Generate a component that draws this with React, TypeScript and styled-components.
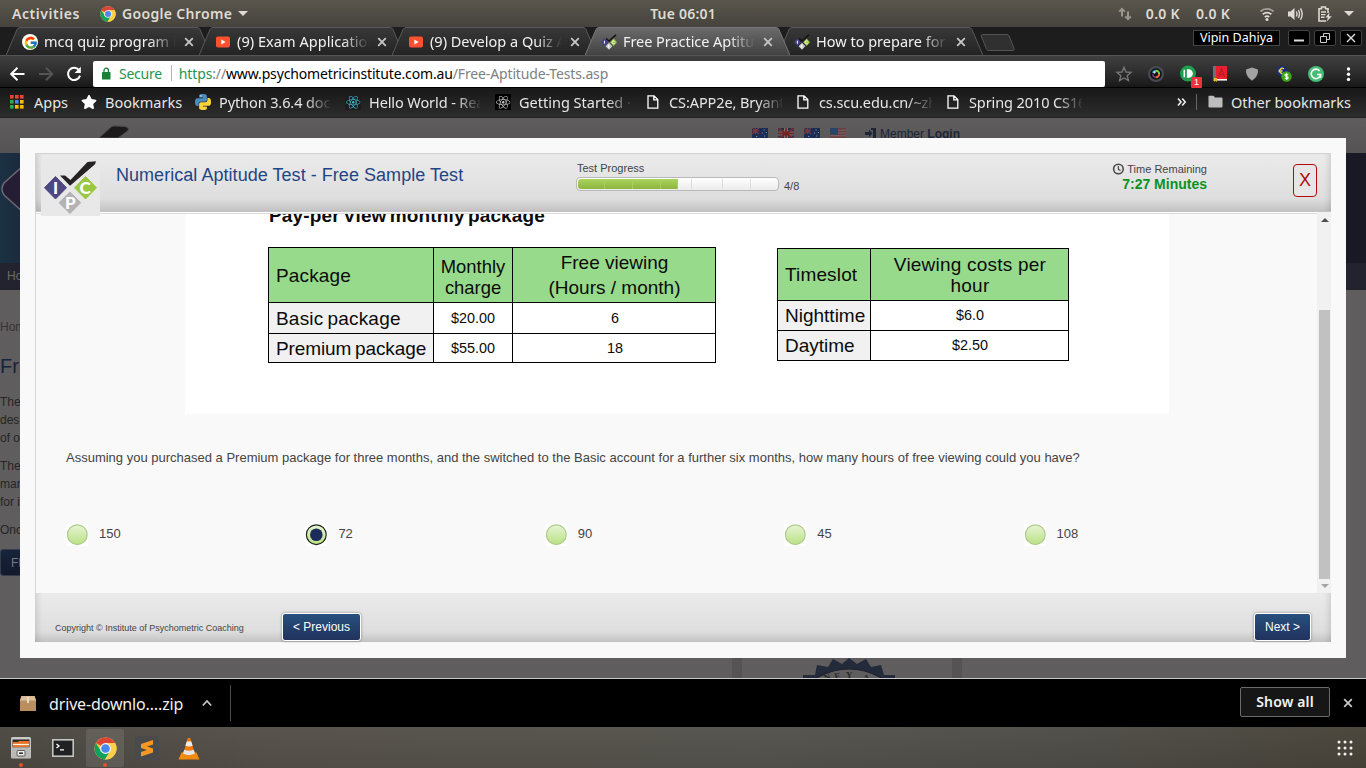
import React from "react";
import styled, { createGlobalStyle, css } from "styled-components";
import { FcGoogle } from "react-icons/fc";
import { FaReact, FaStar } from "react-icons/fa";

const Global = createGlobalStyle`
  * { box-sizing: border-box; }
  body { margin: 0; background: #000; font-family: "Liberation Sans", Arial, sans-serif; }
`;

const uiFont = css`
  font-family: "Noto Sans", "Open Sans", sans-serif;
  font-size: 14.5px;
  white-space: nowrap;
`;

const Screen = styled.div`
  width: 1366px;
  height: 768px;
  display: flex;
  flex-direction: column;
  overflow: hidden;
  & > * { flex-shrink: 0; }
`;

/* ---------- system bar ---------- */

const SystemBar = styled.header`
  ${uiFont}
  height: 27px;
  display: flex;
  align-items: center;
  padding: 0 12px;
  color: #dfdbd2;
  font-weight: 600;
  background: linear-gradient(#5a564d, #45433d);
`;

const SystemSide = styled.div<{ $end?: boolean }>`
  flex: 1;
  display: flex;
  align-items: center;
  justify-content: ${(p) => (p.$end ? "flex-end" : "flex-start")};
`;

const Label = styled.span<{ $size?: number; $ls?: number; $ml?: number; $mr?: number; $w?: number }>`
  font-size: ${(p) => p.$size ?? 14}px;
  letter-spacing: ${(p) => p.$ls ?? 0}px;
  margin-left: ${(p) => p.$ml ?? 0}px;
  margin-right: ${(p) => p.$mr ?? 0}px;
  ${(p) => p.$w && `width: ${p.$w}px;`}
`;

const Caret = styled.i<{ $ml?: number }>`
  border: 5px solid transparent;
  border-top-color: currentColor;
  border-bottom: 0;
  margin-left: ${(p) => p.$ml ?? 6}px;
`;

const Icon = styled.svg<{ $ml?: number; $mr?: number }>`
  display: block;
  flex-shrink: 0;
  margin-left: ${(p) => p.$ml ?? 0}px;
  margin-right: ${(p) => p.$mr ?? 0}px;
`;

/* ---------- tabs ---------- */

const TabStrip = styled.nav`
  height: 28px;
  display: flex;
  background: #1d1d1d;
  padding-left: 6px;
`;

const TabBox = styled.div<{ $active?: boolean }>`
  ${uiFont}
  position: relative;
  z-index: ${(p) => (p.$active ? 2 : 1)};
  width: 205px;
  height: 28px;
  margin-right: -12px;
  padding: 1px 16px 0 16px;
  display: flex;
  align-items: center;
  color: #f2f2f2;
`;

const TabShape = styled.svg`
  position: absolute;
  inset: 0;
  z-index: -1;
`;

const TabTitle = styled.span<{ $ls?: number }>`
  width: 132px;
  margin: -2px 0 0 6px;
  overflow: hidden;
  letter-spacing: ${(p) => p.$ls ?? 0}px;
  mask-image: linear-gradient(90deg, #000 80%, transparent 100%);
`;

const WindowControls = styled.div`
  ${uiFont}
  display: flex;
  align-items: flex-start;
  margin: 3px 4px 0 auto;
  gap: 4px;
`;

const UserTag = styled.span`
  height: 16px;
  width: 87px;
  margin-right: 4px;
  border: 1px solid #444;
  background: #000;
  color: #fff;
  font-size: 12.5px;
  line-height: 14px;
  text-align: center;
`;

const WinButton = styled.span`
  width: 22px;
  height: 16px;
  border: 1px solid #444;
  border-radius: 2px;
  background: #000;
`;

/* ---------- toolbar ---------- */

const Toolbar = styled.div`
  height: 33px;
  display: flex;
  align-items: flex-start;
  padding: 6px 0 0 9px;
  border-top: 1px solid #545454;
  border-bottom: 1px solid #000;
  background: linear-gradient(#404040, #2c2c2c 55%, #181818);
`;

const Omnibox = styled.div`
  ${uiFont}
  width: 1012px;
  height: 26px;
  margin-top: -1px;
  display: flex;
  align-items: center;
  padding: 0 0 2px 8px;
  background: #fff;
  border-radius: 2px;
  color: #000;
`;

const UrlPart = styled.span<{ $c: string }>`
  color: ${(p) => p.$c};
`;

const Divider = styled.span<{ $h: number; $c: string; $m: string }>`
  width: 1px;
  height: ${(p) => p.$h}px;
  margin: ${(p) => p.$m};
  background: ${(p) => p.$c};
`;

const NavIcons = styled.div`
  display: flex;
  width: 84px;
  gap: 10px;
  padding-top: 3px;
`;

const Extensions = styled.div`
  display: flex;
  padding: 3px 0 0 10px;
  gap: 14px;
`;

const ExtensionSlot = styled.div`
  position: relative;
  width: 18px;
  height: 18px;
`;

const Badge = styled.span`
  position: absolute;
  left: 12px;
  top: 12px;
  width: 11px;
  height: 11px;
  background: #f0303c;
  border-radius: 1px;
  color: #fff;
  font-size: 9px;
  line-height: 11px;
  text-align: center;
`;

/* ---------- bookmarks ---------- */

const BookmarkBar = styled.div`
  ${uiFont}
  height: 30px;
  display: flex;
  align-items: center;
  padding: 0 14px 2px 10px;
  color: #e6e6e6;
  background: linear-gradient(#181818, #2c2c2c);
  border-bottom: 1px solid #242424;
`;

const BookmarkItem = styled.div<{ $w: number; $gap: number; $fade?: boolean; $ls?: number }>`
  display: flex;
  align-items: center;
  width: ${(p) => p.$w}px;
  & > span {
    flex: 1;
    margin: 0 ${(p) => (p.$fade ? 15 : 8)}px 0 ${(p) => p.$gap}px;
    letter-spacing: ${(p) => p.$ls ?? 0}px;
    overflow: hidden;
    ${(p) => p.$fade && css`mask-image: linear-gradient(90deg, #000 78%, transparent 102%);`}
  }
`;

/* ---------- dimmed page behind the dialog ---------- */

const Viewport = styled.main`
  position: relative;
  height: 560px;
  background: #5f5d5d;
  overflow: hidden;
  color: #262525;
`;

const PageTop = styled.div`
  height: 35px;
  display: flex;
  align-items: flex-start;
  background: linear-gradient(#5f5d5d, #555354);
`;

const PageMark = styled.svg`
  margin: 6px 0 0 97px;
  display: block;
`;

const Flags = styled.div`
  display: flex;
  gap: 10px;
  margin: 10px 19px 0 621px;
`;

const MemberLogin = styled.div`
  display: flex;
  gap: 3px;
  margin-top: 9px;
  font-size: 12px;
  color: #1d2637;
`;

const Banner = styled.div`
  height: 110px;
  background: linear-gradient(90deg, #1b3143 0, #1a2b3d 20px, #191825 60px);
  overflow: hidden;
`;

const PageNav = styled.div`
  height: 27px;
  padding: 5px 7px;
  background: #232330;
  font-size: 12px;
  line-height: 16px;
  color: #6c6a6a;
`;

const PageText = styled.div`
  font-size: 12px;
  line-height: 18px;
`;

const Crumb = styled.div`
  margin-top: 28px;
  color: #353434;
`;

const PageHeading = styled.h1`
  margin: 18px 0 15px;
  font-size: 20px;
  line-height: 24px;
  font-weight: 400;
  color: #16233c;
`;

const Para = styled.p`
  margin: 0 0 10px;
`;

const PageButton = styled.div`
  width: 60px;
  height: 27px;
  margin-top: 10px;
  padding-left: 10px;
  border: 1px solid #343c4c;
  border-radius: 3px;
  background: linear-gradient(#17243a, #131a2c);
  line-height: 26px;
  color: #77787c;
`;

const SealCard = styled.div`
  position: absolute;
  left: 732px;
  top: 540px;
  width: 230px;
  height: 20px;
  border: solid #555353;
  border-width: 0 10px;
`;

/* ---------- dialog ---------- */

const Dialog = styled.section`
  position: absolute;
  left: 20px;
  top: 20px;
  width: 1326px;
  height: 520px;
  padding: 15px;
  background: #f9f9f9;
`;

const Frame = styled.div`
  height: 489px;
  display: flex;
  flex-direction: column;
  background: #f9f9f9;
`;

const barShade = css`
  background: linear-gradient(#ebebeb, #dedede 78%, #c3c3c3);
  box-shadow: inset 7px 0 6px -5px rgba(0, 0, 0, 0.13), inset -7px 0 6px -5px rgba(0, 0, 0, 0.13);
`;

const TestHeader = styled.div`
  ${barShade}
  position: relative;
  z-index: 1;
  height: 59px;
  display: flex;
  align-items: flex-start;
  border-top: 1px solid #d2d2d2;
  border-left: 1px solid #d2d2d2;
  border-bottom: 1px solid #c4c4c4;
`;

const LogoBox = styled.svg`
  margin: 5px 0 0 5px;
  flex-shrink: 0;
`;

const TestTitle = styled.h2`
  width: 461px;
  margin: 10px 0 0 16px;
  font-size: 18px;
  line-height: 22px;
  font-weight: 400;
  letter-spacing: 0.04px;
  color: #1f4584;
`;

const Progress = styled.div`
  width: 240px;
  padding-top: 7px;
  font-size: 11px;
  line-height: 14px;
  color: #444;
`;

const ProgressRow = styled.div`
  display: flex;
  gap: 5px;
  align-items: flex-start;
  margin: 2px 0 0 -1px;
  & > span { margin-top: 2px; }
`;

const Track = styled.div`
  width: 203px;
  height: 14px;
  border: 1px solid #b9b9b9;
  border-radius: 4px;
  padding: 1px;
  display: flex;
  background: linear-gradient(#fff, #ececec);
`;

const Segment = styled.i<{ $w: number; $on?: boolean }>`
  width: ${(p) => p.$w}px;
  height: 10px;
  border-right: 1px solid ${(p) => (p.$on ? "#a9cf63" : "#dcdcdc")};
  background: ${(p) => (p.$on ? "linear-gradient(#abd45c, #8eb63f)" : "transparent")};
  &:first-child { border-radius: 3px 0 0 3px; }
  &:last-child { border-right: 0; }
`;

const Timer = styled.div`
  margin: 8px 86px 0 auto;
  text-align: right;
  font-size: 11px;
  line-height: 14px;
  color: #444;
`;

const TimerRow = styled.div`
  display: flex;
  align-items: center;
  justify-content: flex-end;
  gap: 3px;
`;

const TimeLeft = styled.strong`
  display: block;
  font-size: 14px;
  line-height: 16px;
  color: #0b9222;
`;

const CloseButton = styled.button`
  width: 24px;
  height: 33px;
  margin: 10px 14px 0 0;
  padding: 0 0 1px;
  border: 1px solid #b30c0c;
  border-radius: 4px;
  background: #e6e6e6;
  color: #b30c0c;
  font: 18px/28px "Liberation Sans", Arial, sans-serif;
`;

const Body = styled.div`
  height: 381px;
  display: flex;
  border-left: 1px solid #d6d6d6;
  overflow: hidden;
`;

const Question = styled.div`
  flex: 1;
  border-top: 1px solid #fff;
  box-shadow: inset 0 1px 0 #dcdcdc;
`;

const Exhibit = styled.div`
  width: 984px;
  height: 200px;
  margin: 1px 0 0 149px;
  padding-left: 83px;
  overflow: hidden;
  background: #fff;
  color: #0b0b0b;
`;

const ExhibitTitle = styled.h3`
  margin: -8px 0 21px 1px;
  font-size: 19px;
  line-height: 20px;
  letter-spacing: 0.15px;
  word-spacing: -2.2px;
  white-space: nowrap;
`;

const Tables = styled.div`
  display: flex;
  align-items: flex-start;
  gap: 61px;
`;

const Grid = styled.div<{ $cols: string; $rows: string; $mt?: number }>`
  display: grid;
  grid-template-columns: ${(p) => p.$cols};
  grid-template-rows: ${(p) => p.$rows};
  gap: 1px;
  padding: 1px;
  margin-top: ${(p) => p.$mt ?? 0}px;
  background: #000;
`;

const Cell = styled.div<{
  $kind: "head" | "name" | "value";
  $left?: boolean;
  $lh?: number;
  $size?: number;
  $ls?: number;
  $ws?: number;
  $drop?: number;
  $shift?: number;
}>`
  display: flex;
  flex-direction: column;
  justify-content: center;
  text-align: ${(p) => (p.$left ? "left" : "center")};
  padding-left: ${(p) => (p.$left ? 7 : p.$shift ?? 0)}px;
  padding-top: ${(p) => p.$drop ?? 0}px;
  font-size: ${(p) => p.$size ?? (p.$kind === "value" ? 14.4 : 19)}px;
  line-height: ${(p) => p.$lh ?? 21}px;
  letter-spacing: ${(p) => p.$ls ?? 0}px;
  word-spacing: ${(p) => p.$ws ?? 0}px;
  white-space: pre;
  background: ${(p) => ({ head: "#98da8c", name: "#f1f1f1", value: "#fff" })[p.$kind]};
`;

const Prompt = styled.p`
  margin: 35px 0 0 30px;
  font-size: 13px;
  line-height: 18px;
  color: #444;
`;

const Options = styled.div`
  display: flex;
  margin: 57px 0 0 30px;
`;

const Option = styled.label`
  width: 239.4px;
  display: flex;
  gap: 11px;
  font-size: 13px;
  line-height: 20px;
  color: #444;
`;

const ScrollBar = styled.div`
  width: 14px;
  display: flex;
  flex-direction: column;
  align-items: center;
  background: #f1f1f1;
`;

const Arrow = styled.i<{ $down?: boolean }>`
  border: 4px solid transparent;
  margin: ${(p) => (p.$down ? "5px" : "6px")} 0 0 1px;
  ${(p) =>
    p.$down
      ? "border-top-color: #a3a3a3; border-bottom: 0;"
      : "border-bottom-color: #505050; border-top: 0;"}
`;

const Thumb = styled.div`
  width: 11px;
  height: 269px;
  margin: 88px 0 0 1px;
  background: #c1c1c1;
`;

const TestFooter = styled.div`
  ${barShade}
  height: 49px;
  display: flex;
  align-items: flex-start;
  padding: 20px 20px 0 20px;
`;

const Copyright = styled.span`
  width: 227px;
  padding-top: 10px;
  font-size: 9px;
  line-height: 10px;
  color: #444;
`;

const NavButton = styled.button<{ $w: number; $end?: boolean }>`
  width: ${(p) => p.$w}px;
  height: 28px;
  margin-left: ${(p) => (p.$end ? "auto" : 0)};
  padding: 0;
  border: 1px solid #fff;
  border-radius: 3px;
  background: linear-gradient(#27507e, #21325c);
  box-shadow: 0 0 3px rgba(0, 0, 0, 0.4);
  color: #fff;
  font: 12px/25px "Liberation Sans", Arial, sans-serif;
`;

/* ---------- download shelf and dock ---------- */

const Shelf = styled.div`
  ${uiFont}
  height: 49px;
  display: flex;
  align-items: center;
  padding: 0 13px 0 20px;
  border-top: 1px solid #c9c9c9;
  background: #000;
  color: #f0f0f0;
`;

const FileName = styled.span`
  width: 134px;
  margin: 1px 0 0 13px;
  font-size: 16px;
  letter-spacing: -0.15px;
`;

const ShowAll = styled.button`
  ${uiFont}
  width: 90px;
  height: 30px;
  margin: 0 13px 2px auto;
  padding: 0 0 1px;
  border: 1px solid #6a6a6a;
  border-radius: 2px;
  background: #161616;
  color: #f4f4f4;
  font-size: 14px;
  font-weight: 600;
  letter-spacing: 0.15px;
`;

const Dock = styled.footer`
  height: 41px;
  display: flex;
  align-items: flex-start;
  padding: 2px 13px 0 2px;
  background:
    linear-gradient(rgba(255, 255, 255, 0.02), rgba(0, 0, 0, 0.06)),
    linear-gradient(90deg, #4c4842, #55514a 20%, #55534d 55%, #4f4d47 80%, #48443a);
`;

const DockItem = styled.div<{ $active?: boolean; $running?: boolean }>`
  position: relative;
  width: 38px;
  height: 38px;
  margin-right: 4px;
  display: flex;
  align-items: center;
  justify-content: center;
  border-radius: 3px;
  background: ${(p) => (p.$active ? "rgba(255,255,255,0.1)" : "transparent")};
  &::after {
    content: "";
    display: ${(p) => (p.$running ? "block" : "none")};
    position: absolute;
    left: 17px;
    bottom: 0;
    width: 4px;
    height: 4px;
    border-radius: 50%;
    background: #e2512a;
  }
`;

const AppGrid = styled.div`
  margin: 11px 0 0 auto;
`;

/* ---------- drawings ---------- */

const ChromeLogo = ({ size }: { size: number }) => (
  <Icon width={size} height={size} viewBox="0 0 24 24">
    <circle cx="12" cy="12" r="11.5" fill="#fc4" />
    <path d="M12 12 2 6.3A11.5 11.5 0 0 1 22 6.3H12Z" fill="#db4437" />
    <path d="M2 6.3A11.5 11.5 0 0 0 11.4 23.5L16.6 14.8 12 12 7.2 14.6Z" fill="#12a15c" />
    <path d="M12 6.3H22A11.5 11.5 0 0 1 11.4 23.5L17 14.8Z" fill="#fdd04a" />
    <circle cx="12" cy="12" r="5.7" fill="#f4f4f4" />
    <circle cx="12" cy="12" r="4.5" fill="#4a87ee" />
  </Icon>
);

const GoogleIcon = () => (
  <Icon width="16" height="16" viewBox="0 0 16 16">
    <circle cx="8" cy="8" r="8" fill="#fff" />
    <FcGoogle x="1.5" y="1.5" width="13" height="13" />
  </Icon>
);

const VideoIcon = () => (
  <Icon width="16" height="16" viewBox="0 0 16 16">
    <rect x="1" y="2.5" width="14" height="11" rx="2" fill="#ff512e" />
    <path d="M6.3 5.5v5L10.6 8Z" fill="#fff" />
  </Icon>
);

const SmallMark = () => (
  <Icon width="16" height="16" viewBox="0 0 16 16">
    <path d="M0 8.2 3.4 4.5 6.9 8.2 3.4 12Z" fill="#443f87" />
    <path d="M9.2 8.2 12.6 4.5 16 8.2 12.6 12Z" fill="#9ac93f" />
    <path d="M4.6 12.2 8 8.8 11.3 12.2 8 15.8Z" fill="#d0d0d0" />
    <path d="M5 4.5 8 7 15 .8" fill="none" stroke="#141414" strokeWidth="1.6" />
    <path d="M3.4 6.7v3M13.6 7.4a1.4 1.4 0 1 0 0 1.8M7.6 10.8v3" stroke="#fff" fill="none" strokeWidth="1" />
  </Icon>
);

const CloseMark = ({ ml }: { ml?: number }) => (
  <Icon width="10" height="10" viewBox="0 0 10 10" $ml={ml}>
    <path d="M1.2 1.2 8.8 8.8M8.8 1.2 1.2 8.8" stroke="#c6c6c6" strokeWidth="1.8" />
  </Icon>
);

const PY =
  "M14.25.18l.9.2.73.26.59.3.45.32.34.34.25.34.16.33.1.3.04.26.02.2-.01.13V8.5l-.05.63-.13.55-.21.46-.26.38-.3.31-.33.25-.35.19-.35.14-.33.1-.3.07-.26.04-.21.02H8.77l-.69.05-.59.14-.5.22-.41.27-.33.32-.27.35-.2.36-.15.37-.1.35-.07.32-.04.27-.02.21v3.06H3.17l-.21-.03-.28-.07-.32-.12-.35-.18-.36-.26-.36-.36-.35-.46-.32-.59-.28-.73-.21-.88-.14-1.05-.05-1.23.06-1.22.16-1.04.24-.87.32-.71.36-.57.4-.44.42-.33.42-.24.4-.16.36-.1.32-.05.24-.01h.16l.06.01h8.16v-.83H6.18l-.01-2.75-.02-.37.05-.34.11-.31.17-.28.25-.26.31-.23.38-.2.44-.18.51-.15.58-.12.64-.1.71-.06.77-.04.84-.02 1.27.05z";

const PythonIcon = () => (
  <Icon width="16" height="16" viewBox="0 0 24 24">
    <path d={PY} fill="#4b8bbe" />
    <path d={PY} fill="#ffd43b" transform="rotate(180 12 12)" />
    <circle cx="8.8" cy="2.9" r="1" fill="#fff" />
  </Icon>
);

const PageIcon = () => (
  <Icon width="12" height="14" viewBox="0 0 12 14">
    <path d="M1 .8H7L10.8 4.6V13.2H1ZM6.8 .8V4.8H10.8" fill="none" stroke="#fff" strokeWidth="1.3" />
  </Icon>
);

const appColors = ["#ea4335", "#ea4335", "#ea4335", "#34a853", "#4285f4", "#fbbc05", "#34a853", "#fbbc05", "#fbbc05"];

const AppsIcon = () => (
  <Icon width="14" height="14" viewBox="0 0 14 14">
    {appColors.map((c, i) => (
      <rect key={i} x={(i % 3) * 5} y={Math.floor(i / 3) * 5} width="3.6" height="3.6" fill={c} />
    ))}
  </Icon>
);

const ReactIcon = ({ color, bg }: { color: string; bg: string }) => (
  <Icon width="16" height="16" viewBox="0 0 16 16">
    <rect width="16" height="16" fill={bg} />
    <FaReact x="1" y="1" width="14" height="14" color={color} />
  </Icon>
);

const Flag = ({ kind }: { kind: "au" | "uk" | "us" }) => (
  <Icon width="16" height="11" viewBox="0 0 16 11">
    <rect width="16" height="11" fill={kind === "us" ? "#6a3f42" : "#1b2c55"} />
    {kind === "us" && (
      <>
        <path d="M0 2.2H16M0 5H16M0 7.8H16" stroke="#77696a" strokeWidth="1.1" />
        <rect width="8" height="6.5" fill="#2b4366" />
      </>
    )}
    {kind === "uk" && (
      <>
        <path d="M0 0 16 11M16 0 0 11" stroke="#716b72" strokeWidth="2" />
        <path d="M8 0V11M0 5.5H16" stroke="#7c7477" strokeWidth="4" />
        <path d="M8 0V11M0 5.5H16M0 0 16 11M16 0 0 11" stroke="#702424" strokeWidth="1.8" />
      </>
    )}
    {kind === "au" && (
      <>
        <path d="M0 0 7 6M7 0 0 6M3.5 0V6M0 3H7" stroke="#753a40" strokeWidth="1.2" />
        <path d="M11.5 2h1.2M13.8 4.5H15M9.8 5H11M12 8h1.2M4 8.5h1.4" stroke="#858691" strokeWidth="1.2" />
      </>
    )}
  </Icon>
);

const markText = { fontFamily: "Lato, sans-serif", fontWeight: 900, fill: "#fff", textAnchor: "middle" as const };

const IpcLogo = () => (
  <LogoBox width="59" height="57" viewBox="0 0 59 57">
    <rect width="59" height="57" fill="#e8e8e8" />
    <path d="M14.5 17.5 25.5 28.8 14.5 40 3.5 28.8Z" fill="#4d4782" stroke="#4d4782" strokeLinejoin="round" />
    <path d="M44.5 17.5 55.5 28.8 44.5 40 33.5 28.8Z" fill="#9bc841" stroke="#9bc841" strokeLinejoin="round" />
    <path d="M29 33 39.7 43.7 29 54.5 18 43.7Z" fill="#b3b3b5" stroke="#b3b3b5" strokeLinejoin="round" />
    <path d="M19 16.5H24L29.5 21 46.5 3 55 2.2 54 5.2 29 26.8Z" fill="#262223" />
    <text x="14.5" y="34.7" fontSize="17" {...markText}>I</text>
    <text x="44" y="34.7" fontSize="17" {...markText}>C</text>
    <text x="29.4" y="49.5" fontSize="17" {...markText}>P</text>
  </LogoBox>
);

const Radio = ({ on }: { on?: boolean }) => (
  <Icon width="22" height="22" viewBox="0 0 22 22">
    <defs>
      <linearGradient id="pea" x1="0" y1="0" x2="0" y2="1">
        <stop offset="0" stopColor="#e6f5d5" />
        <stop offset="1" stopColor="#b9e184" />
      </linearGradient>
    </defs>
    <rect width="22" height="22" fill="#fff" />
    <circle cx="11.3" cy="10.7" r="9.9" fill="url(#pea)" stroke={on ? "#1b2417" : "#aecb8d"} strokeWidth="1.2" />
    {on && <circle cx="11.3" cy="10.7" r="6.3" fill="#1d2b5b" />}
  </Icon>
);

const tabs = [
  { icon: <GoogleIcon />, title: "mcq quiz program in", ls: 0 },
  { icon: <VideoIcon />, title: "(9) Exam Application", ls: 0.05 },
  { icon: <VideoIcon />, title: "(9) Develop a Quiz A", ls: 0 },
  { icon: <SmallMark />, title: "Free Practice Aptitud", ls: -0.05, active: true },
  { icon: <SmallMark />, title: "How to prepare for a", ls: 0 },
];

const bookmarks = [
  { icon: <AppsIcon />, text: "Apps", w: 71, gap: 10, ls: 0 },
  { icon: <FaStar size={16} color="#fff" />, text: "Bookmarks", w: 114, gap: 8, ls: 0 },
  { icon: <PythonIcon />, text: "Python 3.6.4 docu", w: 150, gap: 8, ls: -0.1, fade: true },
  { icon: <ReactIcon color="#3fb8c9" bg="#1c1c1c" />, text: "Hello World - Reac", w: 150, gap: 8, ls: -0.1, fade: true },
  { icon: <ReactIcon color="#c9c9c9" bg="#000" />, text: "Getting Started ·", w: 152, gap: 8, ls: 0, fade: true },
  { icon: <PageIcon />, text: "CS:APP2e, Bryant", w: 150, gap: 10, ls: -0.1, fade: true },
  { icon: <PageIcon />, text: "cs.scu.edu.cn/~zh", w: 150, gap: 10, ls: -0.1, fade: true },
  { icon: <PageIcon />, text: "Spring 2010 CS16", w: 150, gap: 10, ls: -0.1, fade: true },
];

const packages = [
  { name: "Basic package", fee: "$20.00", hours: "6", ls: 0.2, ws: -1.5 },
  { name: "Premium package", fee: "$55.00", hours: "18", ls: -0.1, ws: -1.5 },
];
const slots = [
  { name: "Nighttime", cost: "$6.0" },
  { name: "Daytime", cost: "$2.50" },
];

export default function App() {
  return (
    <Screen>
      <Global />
      <SystemBar>
        <SystemSide>
          <Label $mr={20} $ls={0.55}>Activities</Label>
          <ChromeLogo size={16} />
          <Label $ml={6} $ls={0.33}>Google Chrome</Label>
          <Caret />
        </SystemSide>
        <Label $ls={0.2}>Tue 06:01</Label>
        <SystemSide $end>
          <Icon width="14" height="14" viewBox="0 0 14 14" $mr={14}>
            <path d="M4 9.5V2M1.2 4.6 4 1.8 6.8 4.6M10 4.5V12M7.2 9.4 10 12.2 12.8 9.4" fill="none" stroke="#9a968d" strokeWidth="2" />
          </Icon>
          <Label $mr={16} $ls={0.3}>0.0 K</Label>
          <Label $mr={29} $ls={0.3}>0.0 K</Label>
          <Icon width="16" height="14" viewBox="0 0 16 14" $mr={12}>
            <path d="M1.5 4.5A9.5 9.5 0 0 1 14.5 4.5" fill="none" stroke="#a39f96" strokeWidth="1.8" />
            <path d="M3.8 7.3A6 6 0 0 1 12.2 7.3M5.8 10A3.4 3.4 0 0 1 10.2 10" fill="none" stroke="#dfdbd2" strokeWidth="1.8" />
            <circle cx="8" cy="12.4" r="1.5" fill="#dfdbd2" />
          </Icon>
          <Icon width="17" height="16" viewBox="0 0 17 16" $mr={13}>
            <path d="M1 5.5H3.5L7.5 2V14L3.5 10.5H1Z" fill="#dfdbd2" />
            <path d="M9.3 5.5Q10.7 8 9.3 10.5M11.4 4Q13.6 8 11.4 12M13.5 2.4Q16.8 8 13.5 13.6" fill="none" stroke="#dfdbd2" strokeWidth="1.4" />
          </Icon>
          <Icon width="16" height="16" viewBox="0 0 16 16" $mr={4}>
            <path d="M9 15H2V2.8H4.5V1H8.5V2.8H11V7" fill="none" stroke="#dfdbd2" strokeWidth="1.6" />
            <path d="M4 6H9M4 8.6H8.5M4 11.2H7.5" stroke="#dfdbd2" strokeWidth="1.4" />
            <path d="M12.5 6.5 8.5 11.6H11L9.5 15.8 14.8 10.2H12Z" fill="#dfdbd2" />
          </Icon>
          <Caret $ml={7} />
        </SystemSide>
      </SystemBar>

      <TabStrip>
        {tabs.map((t) => (
          <TabBox key={t.title} $active={t.active}>
            <TabShape width="205" height="28" viewBox="0 0 205 28">
              <defs>
                <linearGradient id={t.active ? "tabOn" : "tabOff"} x1="0" y1="0" x2="0" y2="1">
                  <stop offset="0" stopColor={t.active ? "#6b6b6b" : "#383838"} />
                  <stop offset="1" stopColor={t.active ? "#414141" : "#232323"} />
                </linearGradient>
              </defs>
              <path
                d="M0 28.5 11 2.5Q12 .5 14 .5H191Q193 .5 194 2.5L205 28.5"
                fill={t.active ? "url(#tabOn)" : "url(#tabOff)"}
                stroke={t.active ? "#777" : "#585858"}
              />
            </TabShape>
            {t.icon}
            <TabTitle $ls={t.ls}>{t.title}</TabTitle>
            <CloseMark ml={8} />
          </TabBox>
        ))}
        <Icon width="36" height="28" viewBox="0 0 36 28" $ml={9}>
          <path d="M2.5 7.5H27Q28.5 7.5 29.2 9L34 21.5Q34.5 23.5 33 23.5H9Q7 23.5 6.5 22L1.2 9Q1 7.5 2.5 7.5Z" fill="#303030" stroke="#555" />
        </Icon>
        <WindowControls>
          <UserTag>Vipin Dahiya</UserTag>
          <WinButton>
            <Icon width="20" height="14"><path d="M5 9.5H15" stroke="#ddd" strokeWidth="2" /></Icon>
          </WinButton>
          <WinButton>
            <Icon width="20" height="14">
              <path d="M5.5 5.5H11.5V11.5H5.5ZM8.5 5.5V2.5H14.5V8.5H11.5" fill="none" stroke="#ccc" />
            </Icon>
          </WinButton>
          <WinButton>
            <Icon width="20" height="14"><path d="M6 3 14 11M14 3 6 11" stroke="#ddd" strokeWidth="1.4" /></Icon>
          </WinButton>
        </WindowControls>
      </TabStrip>

      <Toolbar>
        <NavIcons>
          <Icon width="18" height="18" viewBox="0 0 18 18">
            <path d="M15.5 9H2.5M8.5 2.8 2.2 9 8.5 15.2" fill="none" stroke="#fff" strokeWidth="2" />
          </Icon>
          <Icon width="18" height="18" viewBox="0 0 18 18">
            <path d="M2 9H15M9 2.8 15.3 9 9 15.2" fill="none" stroke="#555" strokeWidth="2" />
          </Icon>
          <Icon width="18" height="18" viewBox="0 0 18 18">
            <path d="M14 5.2A6.1 6.1 0 1 0 15 10.6" fill="none" stroke="#fff" strokeWidth="2" />
            <path d="M15.8 1.8V8H9.6Z" fill="#fff" />
          </Icon>
        </NavIcons>
        <Omnibox>
          <Icon width="10" height="13" viewBox="0 0 10 13" $mr={8}>
            <rect x="1" y="5" width="8.5" height="7.5" rx=".6" fill="#1a8038" />
            <path d="M3 5V3.4A2.2 2.2 0 0 1 7.4 3.4V5" fill="none" stroke="#1a8038" strokeWidth="1.3" />
          </Icon>
          <Label $ls={-0.25}><UrlPart $c="#239650">Secure</UrlPart></Label>
          <Divider $h={16} $c="#b5b5b5" $m="0 7px 0 9px" />
          <Label $ls={-0.14}>
            <UrlPart $c="#239650">https</UrlPart>
            <UrlPart $c="#808080">://</UrlPart>
            www.psychometricinstitute.com.au
            <UrlPart $c="#808080">/Free-Aptitude-Tests.asp</UrlPart>
          </Label>
        </Omnibox>
        <Extensions>
          <Icon width="18" height="18" viewBox="0 0 18 18">
            <path d="M9 2.2 11 7 16 7.4 12.2 10.7 13.4 15.6 9 13 4.6 15.6 5.8 10.7 2 7.4 7 7Z" fill="none" stroke="#747474" strokeWidth="1.4" />
          </Icon>
          <Icon width="18" height="18" viewBox="0 0 18 18">
            <circle cx="9" cy="9" r="8" fill="#474b51" />
            <circle cx="9" cy="9" r="5.8" fill="#101216" />
            <path d="M6 8A3.2 3.2 0 0 1 9 5.8" stroke="#3aa0e8" strokeWidth="1.9" fill="none" />
            <path d="M9 5.8A3.2 3.2 0 0 1 12.2 9" stroke="#7fd04a" strokeWidth="1.9" fill="none" />
            <path d="M12.2 9A3.2 3.2 0 0 1 9 12.2" stroke="#f06a3a" strokeWidth="1.9" fill="none" />
            <path d="M9 12.2A3.2 3.2 0 0 1 5.8 9" stroke="#7a3a90" strokeWidth="1.4" fill="none" />
            <circle cx="7.6" cy="7.4" r="1.1" fill="#dfe9f5" />
          </Icon>
          <ExtensionSlot>
            <Icon width="18" height="18" viewBox="0 0 18 18">
              <circle cx="9" cy="8.6" r="8" fill="#1f9e4d" />
              <path d="M5.3 4.8V12.2M8.6 5V12H9.6A3.5 3.5 0 0 0 9.6 5Z" fill="#fff" stroke="#fff" strokeWidth="1.5" />
            </Icon>
            <Badge>1</Badge>
          </ExtensionSlot>
          <Icon width="18" height="18" viewBox="0 0 18 18">
            <rect x="2" y="1" width="4" height="15" fill="#6c7077" />
            <rect x="5" y="1" width="11" height="13" fill="#e8202e" />
            <path d="M7.5 12 10.5 4 13.5 12M8.5 9.5H12.5" stroke="#b81824" strokeWidth="1.2" fill="none" />
            <path d="M5 14.8H16" stroke="#f4f4f4" strokeWidth="1.6" />
            <path d="M3 13h3v4l-1.5-1.2-1.5 1.2z" fill="#f1b12c" />
          </Icon>
          <Icon width="18" height="18" viewBox="0 0 18 18">
            <path d="M9 2.5 15 4.6Q15.6 11.5 9 15.8 2.4 11.5 3 4.6Z" fill="#a2a2a2" />
          </Icon>
          <Icon width="18" height="18" viewBox="0 0 18 18">
            <circle cx="7" cy="6" r="5.2" fill="#182a8c" />
            <path d="M9 3.8A2.7 2.7 0 1 0 9 8M3.5 5.2H7.5M3.5 6.8H7.5" fill="none" stroke="#f5e23c" strokeWidth="1.1" />
            <circle cx="11.5" cy="11.5" r="5.2" fill="#3fa51c" />
            <path d="M13.2 9.8Q10 8.6 10 10.3 10 11.2 11.6 11.5 13.2 11.8 13.2 12.8 13 14.4 9.9 13.3M11.6 8.2V15" fill="none" stroke="#fff" strokeWidth="1.1" />
          </Icon>
          <Icon width="18" height="18" viewBox="0 0 18 18">
            <circle cx="9" cy="9" r="8" fill="#45bd74" />
            <path d="M12.6 5.9A4.7 4.7 0 1 0 13.6 9.5H10M13.6 9.3V12.8" fill="none" stroke="#fff" strokeWidth="1.6" />
          </Icon>
          <Icon width="18" height="18" viewBox="0 0 18 18">
            <circle cx="9.5" cy="4" r="1.7" fill="#fff" />
            <circle cx="9.5" cy="9.2" r="1.7" fill="#fff" />
            <circle cx="9.5" cy="14.4" r="1.7" fill="#fff" />
          </Icon>
        </Extensions>
      </Toolbar>

      <BookmarkBar>
        {bookmarks.map((b) => (
          <BookmarkItem key={b.text} $w={b.w} $gap={b.gap} $fade={b.fade} $ls={b.ls}>
            {b.icon}
            <span>{b.text}</span>
          </BookmarkItem>
        ))}
        <Icon width="10" height="10" viewBox="0 0 10 10" $ml={80}>
          <path d="M1 1.5 4 5 1 8.5M5.2 1.5 8.2 5 5.2 8.5" fill="none" stroke="#eee" strokeWidth="1.6" />
        </Icon>
        <Divider $h={16} $c="#666" $m="0 11px 0 9px" />
        <Icon width="15" height="13" viewBox="0 0 15 13" $mr={8}>
          <path d="M1 .8H5.5L7 2.5H13.5Q14.5 2.5 14.5 3.5V11.5Q14.5 12.5 13.5 12.5H1.5Q.5 12.5 .5 11.5V1.5Q.5 .8 1 .8Z" fill="#bdbdbd" />
        </Icon>
        <span>Other bookmarks</span>
      </BookmarkBar>

      <Viewport>
        <PageTop>
          <PageMark width="34" height="14" viewBox="0 0 34 14">
            <path d="M2 14 14 3Q16 1.5 19 2L28 2.5Q33 4 30.5 7L21 14Z" fill="#1d1a1b" stroke="#4b494a" />
          </PageMark>
          <Flags>
            <Flag kind="au" />
            <Flag kind="uk" />
            <Flag kind="au" />
            <Flag kind="us" />
          </Flags>
          <MemberLogin>
            <Icon width="12" height="12" viewBox="0 0 12 12">
              <path d="M6 1H11V12H8V3H6ZM0 5H4V2.5L7.5 6.5 4 10V8H0Z" fill="#1d2637" />
            </Icon>
            <span>Member <b>Login</b></span>
          </MemberLogin>
        </PageTop>
        <Banner>
          <Icon width="40" height="60" viewBox="0 0 40 60">
            <path d="M24 12 4 30Q0 36 4 42L24 60" fill="#241d33" stroke="#6d6872" strokeWidth="1.5" />
          </Icon>
        </Banner>
        <PageNav>Ho</PageNav>
        <PageText>
          <Crumb>Hom</Crumb>
          <PageHeading>Fr</PageHeading>
          <Para>The<br />des<br />of o</Para>
          <Para>The<br />mar<br />for i</Para>
          <Para>Onc</Para>
          <PageButton>FI</PageButton>
        </PageText>
        <SealCard>
          <Icon width="96" height="20" viewBox="0 0 96 20" $ml={59}>
            <path d="M2 20V17L14 17 16 7 27 9 32 1 41 6 48 0 56 6 65 1 70 9 80 7 83 17 94 17V20Z" fill="#232a3a" />
            <path d="M12 22Q48 0 84 22" fill="#5f5d5d" stroke="#1d2230" strokeWidth="1.2" />
            <g fontFamily="Liberation Serif, serif" fontSize="9" fontWeight="700" fill="#262525">
              <text x="24" y="23" transform="rotate(-18 24 23)">N</text>
              <text x="34" y="21.5" transform="rotate(-10 34 21)">E</text>
              <text x="45" y="20">Y</text>
              <text x="62" y="23">A</text>
            </g>
          </Icon>
        </SealCard>

        <Dialog>
          <Frame>
            <TestHeader>
              <IpcLogo />
              <TestTitle>Numerical Aptitude Test - Free Sample Test</TestTitle>
              <Progress>
                Test Progress
                <ProgressRow>
                  <Track>
                    <Segment $w={27} $on />
                    <Segment $w={28} $on />
                    <Segment $w={28} $on />
                    <Segment $w={17} $on />
                    <Segment $w={14} />
                    <Segment $w={31} />
                    <Segment $w={28} />
                    <Segment $w={26} />
                  </Track>
                  <span>4/8</span>
                </ProgressRow>
              </Progress>
              <Timer>
                <TimerRow>
                  <Icon width="12" height="12" viewBox="0 0 12 12">
                    <circle cx="6.4" cy="6" r="4.8" fill="none" stroke="#4a4a4a" strokeWidth="1.6" />
                    <path d="M6.4 3V6.3L8.6 7.5" fill="none" stroke="#4a4a4a" strokeWidth="1.2" />
                  </Icon>
                  Time Remaining
                </TimerRow>
                <TimeLeft>7:27 Minutes</TimeLeft>
              </Timer>
              <CloseButton>X</CloseButton>
            </TestHeader>

            <Body>
              <Question>
                <Exhibit>
                  <ExhibitTitle>Pay-per View monthly package</ExhibitTitle>
                  <Tables>
                    <Grid $cols="164px 78px 202px" $rows="54px 30px 28px">
                      <Cell $kind="head" $left $ls={0.15}>Package</Cell>
                      <Cell $kind="head" $size={18.4} $drop={4}>{"Monthly\ncharge"}</Cell>
                      <Cell $kind="head" $lh={25} $shift={1}>{"Free viewing\n(Hours / month)"}</Cell>
                      {packages.map((p) => (
                        <React.Fragment key={p.name}>
                          <Cell $kind="name" $left $ls={p.ls} $ws={p.ws}>{p.name}</Cell>
                          <Cell $kind="value">{p.fee}</Cell>
                          <Cell $kind="value" $shift={2}>{p.hours}</Cell>
                        </React.Fragment>
                      ))}
                    </Grid>
                    <Grid $cols="92px 197px" $rows="51px 29px 29px" $mt={1}>
                      <Cell $kind="head" $left $ls={0.15}>Timeslot</Cell>
                      <Cell $kind="head" $ls={0.22} $drop={1} $shift={1}>{"Viewing costs per\nhour"}</Cell>
                      {slots.map((s) => (
                        <React.Fragment key={s.name}>
                          <Cell $kind="name" $left>{s.name}</Cell>
                          <Cell $kind="value" $shift={1}>{s.cost}</Cell>
                        </React.Fragment>
                      ))}
                    </Grid>
                  </Tables>
                </Exhibit>
                <Prompt>
                  Assuming you purchased a Premium package for three months, and the switched to the Basic account for a
                  further six months, how many hours of free viewing could you have?
                </Prompt>
                <Options>
                  {["150", "72", "90", "45", "108"].map((v) => (
                    <Option key={v}>
                      <Radio on={v === "72"} />
                      {v}
                    </Option>
                  ))}
                </Options>
              </Question>
              <ScrollBar>
                <Arrow />
                <Thumb />
                <Arrow $down />
              </ScrollBar>
            </Body>

            <TestFooter>
              <Copyright>Copyright © Institute of Psychometric Coaching</Copyright>
              <NavButton $w={79}>&lt; Previous</NavButton>
              <NavButton $w={57} $end>Next &gt;</NavButton>
            </TestFooter>
          </Frame>
        </Dialog>
      </Viewport>

      <Shelf>
        <Icon width="16" height="15" viewBox="0 0 16 15">
          <path d="M1.5 0H14.5L16 4V15H0V4Z" fill="#b98f62" />
          <path d="M1.5 0H14.5L16 4.5H0Z" fill="#dcbf9a" />
          <path d="M8 1V7" stroke="#efe0ca" strokeWidth="1.8" />
        </Icon>
        <FileName>drive-downlo….zip</FileName>
        <Icon width="10" height="8" viewBox="0 0 10 8" $ml={19} $mr={18}>
          <path d="M.8 6.5 5 2 9.2 6.5" fill="none" stroke="#c8c8c8" strokeWidth="1.7" />
        </Icon>
        <Divider $h={36} $c="#4a4a4a" $m="0" />
        <ShowAll>Show all</ShowAll>
        <CloseMark />
      </Shelf>

      <Dock>
        <DockItem $running>
          <Icon width="22" height="22" viewBox="0 0 22 22">
            <rect x="1" y="0" width="20" height="21.5" rx="1.5" fill="#c9c9c7" />
            <rect x="2.5" y="2.5" width="17" height="8" fill="#2e2a27" />
            <path d="M3 8V5H8L9 4H19V10H3Z" fill="#e4742c" />
            <path d="M3 7.5H19" stroke="#fff3e2" strokeWidth="1.2" />
            <path d="M1.5 10.5H20.5V21H1.5Z" fill="#b9b9b7" />
            <rect x="7" y="13.5" width="8" height="5.5" rx="1" fill="#eee" stroke="#5b5b5b" />
            <path d="M9 16.2H13" stroke="#333" strokeWidth="1.6" />
          </Icon>
        </DockItem>
        <DockItem>
          <Icon width="22" height="18" viewBox="0 0 22 18">
            <rect x=".8" y=".8" width="20.4" height="16.4" fill="#1f2122" stroke="#c4c4c2" strokeWidth="1.6" />
            <path d="M4.5 5 7 7 4.5 9M8 10.8H12" fill="none" stroke="#fff" strokeWidth="1.3" />
          </Icon>
        </DockItem>
        <DockItem $active $running><ChromeLogo size={23} /></DockItem>
        <DockItem>
          <Icon width="24" height="24" viewBox="0 0 24 24">
            <rect width="24" height="24" rx="2" fill="#4a4a4b" />
            <path d="M18 4V8.5L12 10.5 18 12.5V16.5L6 20.5V16L12 14 6 12V8Z" fill="#f89820" />
          </Icon>
        </DockItem>
        <DockItem>
          <Icon width="22" height="23" viewBox="0 0 22 23">
            <path d="M3.5 15.5H18.5L21.5 22.5H.5Z" fill="#f48b0c" />
            <path d="M9.8 1H12.2L17 17Q11 20.5 5 17Z" fill="#f07a0c" />
            <path d="M8.7 4.5H13.3L14.6 8.8Q11 10.3 7.4 8.8Z" fill="#ececec" />
            <path d="M6.2 12.7Q11 15 15.8 12.7L17 16.5Q11 20 5 16.5Z" fill="#e4e4e4" />
          </Icon>
        </DockItem>
        <AppGrid>
          <Icon width="16" height="16" viewBox="0 0 16 16">
            {[0, 1, 2, 3, 4, 5, 6, 7, 8].map((i) => (
              <circle key={i} cx={2 + (i % 3) * 6} cy={2 + Math.floor(i / 3) * 6} r="1.5" fill="#f2f1ee" />
            ))}
          </Icon>
        </AppGrid>
      </Dock>
    </Screen>
  );
}
